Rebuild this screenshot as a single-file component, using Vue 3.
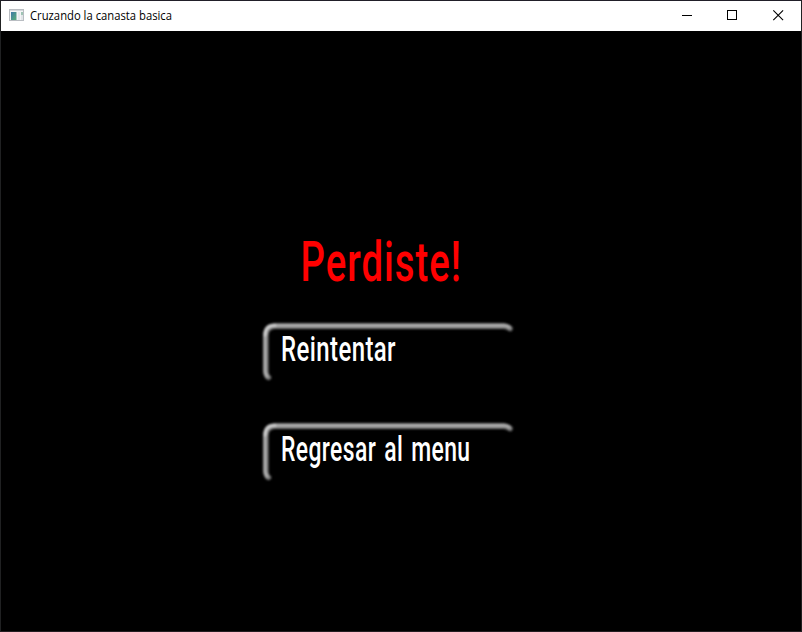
<script setup>
const buttons = [
  { label: 'Reintentar', width: 115 },
  { label: 'Regresar al menu', width: 189.5 },
]
</script>

<template>
  <div class="window">
    <header class="titlebar">
      <svg class="app-icon" width="16" height="14" viewBox="0 0 16 14">
        <defs>
          <linearGradient id="screen" x1="0" y1="0" x2="1" y2="1">
            <stop offset="0" stop-color="#3f78a8" />
            <stop offset="1" stop-color="#5aae79" />
          </linearGradient>
        </defs>
        <rect x="0.5" y="1.5" width="14" height="11" fill="#f4f5f6" stroke="#b9bdc2" />
        <rect x="1" y="2" width="13" height="1" fill="#d5d8dc" />
        <rect x="2" y="4" width="5" height="8" fill="url(#screen)" />
        <rect x="7" y="4" width="1" height="8" fill="#a9c9c4" />
        <rect x="9" y="4" width="2" height="8" fill="#e6e9ed" />
        <rect x="12" y="4" width="2" height="3" fill="#9fc4b4" />
        <rect x="12" y="7" width="2" height="5" fill="#e2e5e8" />
      </svg>
      <svg class="title" width="150" height="20">
        <text x="0" y="14" textLength="142" lengthAdjust="spacingAndGlyphs">Cruzando la canasta basica</text>
      </svg>
      <div class="controls">
        <svg width="46" height="30" shape-rendering="crispEdges">
          <rect x="18" y="14" width="10" height="1" />
        </svg>
        <svg width="46" height="30" shape-rendering="crispEdges">
          <rect x="17.5" y="9.5" width="9" height="9" fill="none" stroke="#000" />
        </svg>
        <svg width="46" height="30">
          <path d="M17.3 9.3l9.8 9.8M27.1 9.3l-9.8 9.8" fill="none" stroke="#000" stroke-width="1.1" />
        </svg>
      </div>
    </header>

    <main class="screen">
      <svg class="heading" width="300" height="80">
        <text x="10.5" y="61" textLength="161.5" lengthAdjust="spacingAndGlyphs">Perdiste!</text>
      </svg>
      <svg v-for="button in buttons" :key="button.label" class="button" width="400" height="66" role="button" :aria-label="button.label">
        <defs>
          <filter id="soft" x="-10%" y="-20%" width="120%" height="140%">
            <feGaussianBlur stdDeviation="0.9" />
          </filter>
        </defs>
        <g filter="url(#soft)" fill="none" stroke-linecap="round">
          <path d="M8.5 59.5Q5.9 58 5.9 53V18Q5.9 8.2 15 8.2H244Q247 8.2 250 10.5" stroke="#777" stroke-width="5.4" />
          <path d="M7 58Q5 56 5 53V18Q5 7.2 15 7.2H244Q247 7.2 249 9" stroke="#aaa" stroke-width="3.4" />
          <path d="M5 17Q5 7.2 15 7.2" stroke="#ccc" stroke-width="3" />
        </g>
        <text x="21" y="42.6" :textLength="button.width" lengthAdjust="spacingAndGlyphs">{{ button.label }}</text>
      </svg>
    </main>
  </div>
</template>

<style>
body {
  background: #000;
}
</style>

<style scoped>
.window {
  box-sizing: border-box;
  width: 802px;
  height: 632px;
  border: 1px solid #202122;
  border-top-color: #211f29;
  border-bottom-color: #241e22;
  background: #000;
  overflow: hidden;
}
svg {
  display: block;
  flex: none;
  overflow: visible;
}
.titlebar {
  display: flex;
  height: 30px;
  background: #fff;
}
.app-icon {
  margin: 7px 0 0 8px;
}
.title {
  margin: 5px 0 0 5px;
}
.title text {
  font: 12px "Open Sans", "Noto Sans", sans-serif;
}
.controls {
  display: flex;
  margin-left: auto;
  margin-right: -1px;
}
.screen {
  display: flex;
  flex-direction: column;
  padding: 189px 0 0 259px;
}
.heading {
  margin-left: 30px;
}
.heading text {
  font: 500 56px Roboto, sans-serif;
  letter-spacing: 1.5px;
  fill: #f00;
}
.button {
  margin: 18px 0 16px;
}
.button text {
  font: 500 34.5px Roboto, sans-serif;
  letter-spacing: 0.6px;
  word-spacing: 3px;
  fill: #fff;
}
</style>
